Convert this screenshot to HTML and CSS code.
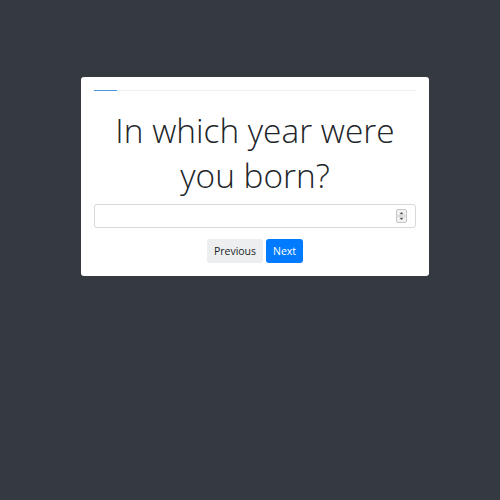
FILE: index.html
```html
<!DOCTYPE html>
<html>
<head>
<meta charset="utf-8">
<link rel="stylesheet" href="styles.css">
</head>
<body>
<div class="page">
  <div class="card">
    <div class="progress"><div class="progress-bar" style="width:7%"></div></div>
    <h1 class="question">In which year were you born?</h1>
    <div class="field">
      <input class="field-input" type="text" aria-label="Year">
      <svg class="spinner" width="11" height="14" viewBox="0 0 11 14">
        <rect x="0.5" y="0.5" width="10" height="13" rx="1.5" fill="#f0f0f0" stroke="#c8c8c8"/>
        <line x1="1" y1="7" x2="10" y2="7" stroke="#c8c8c8"/>
        <path d="M3.5 5.2 L5.5 3 L7.5 5.2 Z" fill="#555"/>
        <path d="M3.5 8.8 L5.5 11 L7.5 8.8 Z" fill="#555"/>
      </svg>
    </div>
    <div class="actions">
      <button class="btn btn-light">Previous</button>
      <button class="btn btn-primary">Next</button>
    </div>
  </div>
</div>
</body>
</html>
```
FILE: styles.css
```css
html, body {
  margin: 0;
  padding: 0;
  background: #343a40;
  height: 100%;
}
body {
  font-family: "Open Sans", "Liberation Sans", sans-serif;
}
.page {
  padding-top: 77px;
  padding-left: 81px;
}
.card {
  width: 348px;
  box-sizing: border-box;
  background: #fff;
  border-radius: 3px;
  padding: 13px 13px 13px 13px;
}
.progress {
  height: 1px;
  background: #eef0f2;
  display: flex;
}
.progress-bar {
  background: #4d94db;
  height: 1px;
}
.question {
  margin: 17px 0 0 0;
  font-weight: 300;
  font-size: 33.4px;
  line-height: 45px;
  text-align: center;
  color: #212529;
}
.field {
  margin-top: 6px;
  height: 24px;
  box-sizing: border-box;
  border: 1px solid #d6dadf;
  border-radius: 3px;
  display: flex;
  align-items: center;
  padding-right: 8px;
}
.field-input {
  flex: 1;
  border: none;
  outline: none;
  background: transparent;
  height: 20px;
  padding: 0 8px;
}
.spinner {
  display: block;
}
.actions {
  margin-top: 11px;
  display: flex;
  justify-content: center;
  gap: 3px;
}
.btn {
  height: 24px;
  border: none;
  border-radius: 3px;
  font-family: "Open Sans", "Liberation Sans", sans-serif;
  font-size: 10.5px;
  padding: 0 7px;
  cursor: pointer;
}
.btn-light {
  background: #eceeef;
  color: #212529;
}
.btn-primary {
  background: #007bff;
  color: #fff;
}
```
